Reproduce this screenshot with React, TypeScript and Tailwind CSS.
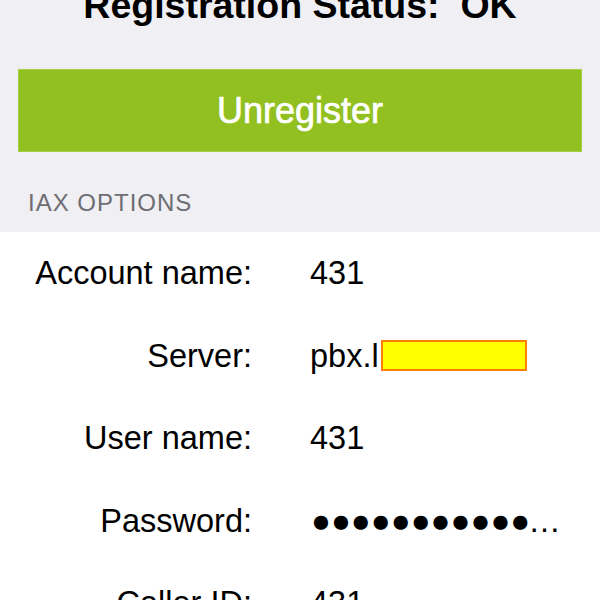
import React from "react";

const rows: { label: string; value: React.ReactNode }[] = [
  { label: "Account name:", value: "431" },
  {
    label: "Server:",
    value: (
      <span className="flex items-center">
        <span>pbx.l</span>
        <span className="ml-[2px] inline-block h-[31px] w-[146px] border-2 border-[#ff8000] bg-[#ffff00]" />
      </span>
    ),
  },
  { label: "User name:", value: "431" },
  {
    label: "Password:",
    value: (
      <span className="flex items-center">
        <span className="ml-[1px] text-[33px] tracking-[0px] leading-[40px]">●●●●●●●●●●●</span>
        <span className="-ml-[2px]">…</span>
      </span>
    ),
  },
  { label: "Caller ID:", value: "431" },
];

export default function App() {
  return (
    <div className="h-[600px] w-[600px] overflow-hidden bg-white font-['Liberation_Sans',Arial,sans-serif] text-black">
      <div className="bg-[#efeff4]">
        <div className="-mt-[13px] whitespace-pre text-center text-[37.5px] font-bold leading-[37px]">
          Registration Status:  OK
        </div>
        <div className="px-[18px] pt-[45px]">
          <button className="flex h-[83px] w-full items-center justify-center border border-[#a6cf48] bg-[#92c020] text-[36px] text-white [-webkit-text-stroke:0.7px_white]">
            Unregister
          </button>
        </div>
        <div className="pb-[17px] pl-[28px] pt-[39px] text-[24px] leading-[24px] tracking-[1px] text-[#6d6d72]">
          IAX OPTIONS
        </div>
      </div>
      <div className="flex flex-col">
        {rows.map((r) => (
          <div key={r.label} className="flex h-[82.5px] shrink-0 items-center text-[32.5px] leading-[40px]">
            <div className="w-[252px] shrink-0 text-right">{r.label}</div>
            <div className="ml-[58px]">{r.value}</div>
          </div>
        ))}
      </div>
    </div>
  );
}
